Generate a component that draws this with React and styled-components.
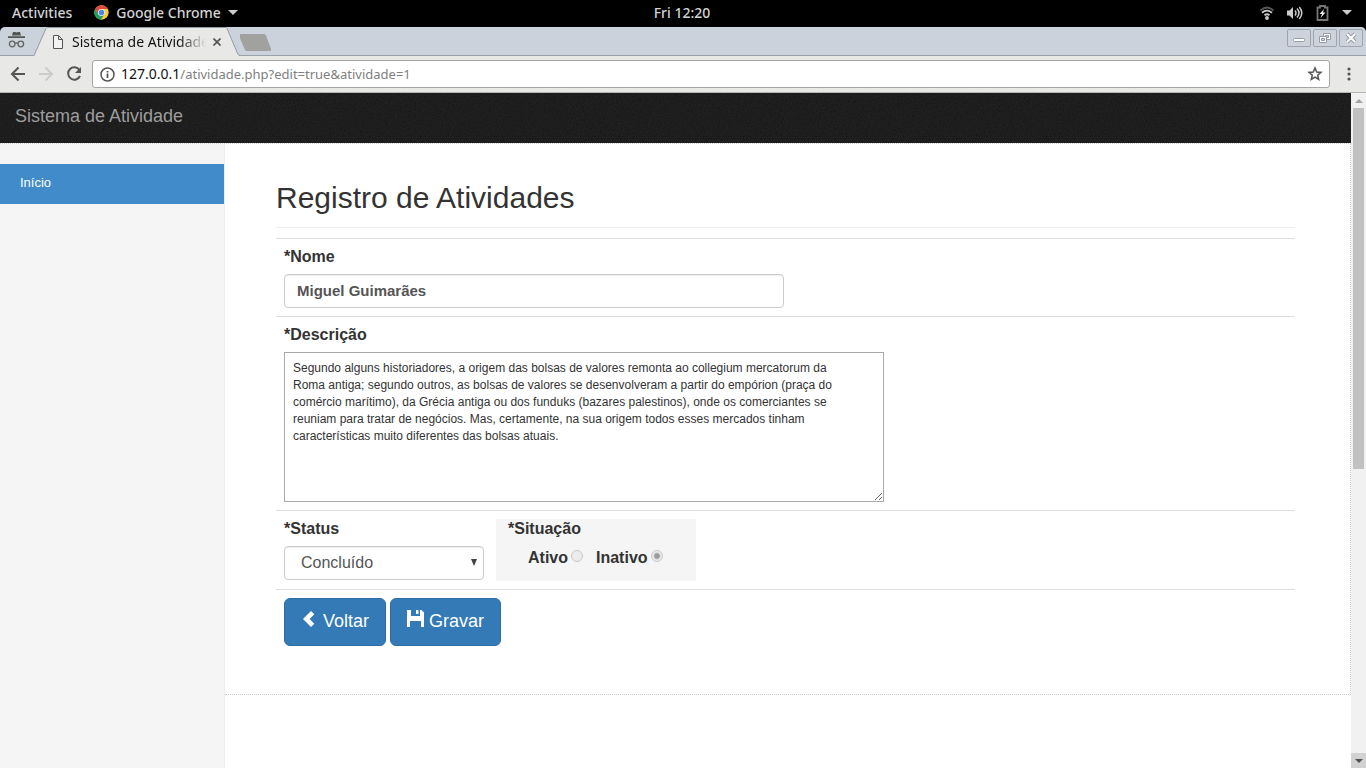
import React from 'react';
import styled, { createGlobalStyle } from 'styled-components';

const uiFont = '"Noto Sans", "Open Sans", sans-serif';
const pageFont = '"Liberation Sans", Arial, sans-serif';

const GlobalStyle = createGlobalStyle`
  *, *::before, *::after { box-sizing: border-box; }
  body { margin: 0; background: #000; font-family: ${pageFont}; color: #333; }
  button, input, select, textarea { font-family: inherit; margin: 0; }
  svg { display: block; flex: none; }
`;

const Desktop = styled.div`
  display: flex;
  flex-direction: column;
  height: 100vh;
  overflow: hidden;
`;

const TopBar = styled.header`
  display: grid;
  grid-template-columns: 1fr auto 1fr;
  align-items: center;
  flex: none;
  height: 27px;
  padding: 0 14px 2px 12px;
  background: #000;
  color: #d3d3d3;
  font: 500 14px/24px ${uiFont};
`;

const BarGroup = styled.div`
  display: flex;
  align-items: center;
  justify-content: ${(p) => (p.$end ? 'flex-end' : 'flex-start')};
  gap: ${(p) => p.$gap}px;
`;

const BarButton = styled.button`
  display: flex;
  align-items: center;
  gap: 7px;
  padding: 0;
  border: 0;
  background: none;
  color: inherit;
  font: inherit;
`;

const TabStrip = styled.div`
  display: flex;
  flex: none;
  height: 29px;
  background: #cbd2db;
  border-radius: 5px 5px 0 0;
  border-bottom: 1px solid #9ba1a8;
`;

const Incognito = styled.div`
  padding: 5px 0 0 8px;
  width: 34px;
`;

const Tab = styled.div`
  position: relative;
  display: flex;
  align-items: center;
  width: 206px;
  height: 29px;
  padding: 0 19px 0 19px;
`;

const TabShape = styled.svg`
  position: absolute;
  left: 0;
  top: 0;
`;

const TabTitle = styled.span`
  position: relative;
  flex: 1;
  min-width: 0;
  margin: 0 7px 0 9px;
  overflow: hidden;
  white-space: nowrap;
  color: #111;
  font: 14px/28px ${uiFont};
  mask-image: linear-gradient(to right, #000 80%, transparent);
`;

const IconButton = styled.button`
  position: relative;
  display: flex;
  padding: 0;
  border: 0;
  background: none;
`;

const WindowButtons = styled.div`
  display: flex;
  gap: 2px;
  margin-left: auto;
  padding: 2px 3px 0 0;
`;

const WindowButton = styled.button`
  display: flex;
  align-items: center;
  justify-content: center;
  width: 24px;
  height: 18px;
  padding: 0;
  background: #ccd3dc;
  border: 1px solid #9fa5ad;
  border-radius: 2px;
`;

const Toolbar = styled.div`
  display: flex;
  align-items: center;
  flex: none;
  height: 37px;
  padding: 0 14px 0 10px;
  background: #e8e8e7;
  border-bottom: 1px solid #b5b5b5;
`;

const NavButtons = styled.div`
  display: flex;
  gap: 12px;
  margin-right: 10px;
`;

const AddressBar = styled.div`
  display: flex;
  align-items: center;
  flex: 1;
  height: 28px;
  margin-right: 16px;
  padding: 0 6px 0 7px;
  background: #fff;
  border: 1px solid #a5a5a5;
  border-radius: 3px;
`;

const Url = styled.div`
  flex: 1;
  margin-left: 6px;
  color: #808080;
  font: 13px/26px ${uiFont};

  b { color: #111; font-size: 14px; font-weight: 400; }
`;

const Viewport = styled.div`
  display: flex;
  flex: 1;
  min-height: 0;
  background: #fff;
`;

const Page = styled.div`
  display: flex;
  flex-direction: column;
  flex: 1;
  min-width: 0;
`;

const Navbar = styled.nav`
  position: relative;
  flex: none;
  height: 50px;
  padding: 13px 15px;
  background: #131313;
`;

const Grain = styled.svg`
  position: absolute;
  inset: 0;
  width: 100%;
  height: 100%;
`;

const Brand = styled.a`
  position: relative;
  color: #9d9d9d;
  font-size: 18px;
  line-height: 20px;
  text-decoration: none;
`;

const Columns = styled.div`
  display: flex;
  flex: 1;
  border-top: 1px dotted #ccc;
`;

const Sidebar = styled.aside`
  flex: none;
  width: 225px;
  padding-top: 20px;
  background: #f5f5f5;
  border-right: 1px solid #eee;
`;

const SideLink = styled.a`
  display: block;
  padding: 9px 20px 11px;
  background: #428bca;
  color: #fff;
  font-size: 13px;
  line-height: 20px;
  text-decoration: none;
`;

const Main = styled.main`
  flex: 1;
  align-self: flex-start;
  padding: 37px 55px 40px 51px;
  border: dotted #ccc;
  border-width: 0 1px 1px 0;
`;

const Title = styled.h1`
  margin: 0 0 10px;
  padding-bottom: 13px;
  border-bottom: 1px solid #eee;
  font-size: 30px;
  font-weight: 400;
  line-height: 33px;
`;

const Row = styled.div`
  display: flex;
  flex-direction: ${(p) => (p.$inline ? 'row' : 'column')};
  align-items: flex-start;
  gap: ${(p) => p.$gap || 0}px;
  padding: 8px;
  border-top: 1px solid #ddd;
`;

const Label = styled.label`
  display: block;
  margin-bottom: 7px;
  font-size: 16px;
  font-weight: 700;
  line-height: 20px;
`;

const TextInput = styled.input`
  width: 500px;
  max-width: 100%;
  height: 34px;
  padding: 4px 12px 6px;
  border: 1px solid #ccc;
  border-radius: 4px;
  box-shadow: inset 0 1px 1px rgba(0, 0, 0, 0.075);
  color: #555;
  font-size: 15px;
  font-weight: 700;
`;

const TextArea = styled.textarea`
  display: block;
  width: 600px;
  max-width: 100%;
  height: 150px;
  padding: 7px 40px 7px 8px;
  border: 1px solid #a9a9a9;
  color: #333;
  font-size: 12px;
  line-height: 17px;
`;

const SelectWrap = styled.div`
  position: relative;
`;

const Select = styled.select`
  display: block;
  appearance: none;
  width: 200px;
  height: 34px;
  padding: 0 16px 2px;
  background: #fff;
  border: 1px solid #ccc;
  border-radius: 4px;
  box-shadow: inset 0 1px 1px rgba(0, 0, 0, 0.075);
  color: #555;
  font-size: 16px;
`;

const SelectArrow = styled.svg`
  position: absolute;
  right: 7px;
  top: 13px;
  pointer-events: none;
`;

const Situation = styled.fieldset`
  width: 200px;
  height: 62px;
  margin: 0;
  padding: 0 12px;
  border: 0;
  background: #f5f5f5;
`;

const Legend = styled.legend`
  float: left;
  width: 100%;
  padding: 0;
  margin-bottom: 7px;
  font-size: 16px;
  font-weight: 700;
  line-height: 20px;
`;

const Radios = styled.div`
  clear: both;
  display: flex;
  gap: 13px;
  padding-left: 20px;
`;

const RadioLabel = styled.label`
  display: flex;
  gap: 3px;
  font-size: 16px;
  font-weight: 700;
  line-height: 24px;
`;

const Radio = styled.input`
  appearance: none;
  width: 12px;
  height: 12px;
  margin-top: 4px;
  border: 1px solid #c8c8c8;
  border-radius: 50%;
  background: #ececec;

  &:checked { background: radial-gradient(circle, #9a9a9a 0 2px, #ececec 4px); }
`;

const Primary = styled.button`
  display: flex;
  gap: 5px;
  padding: 9px 16px 11px;
  background: #337ab7;
  border: 1px solid #2e6da4;
  border-radius: 6px;
  color: #fff;
  font-size: 18px;
  line-height: 26px;

  svg { margin-top: 2px; }
`;

const Scrollbar = styled.div`
  display: flex;
  flex-direction: column;
  flex: none;
  width: 15px;
  background: #f1f1f1;
`;

const ScrollButton = styled.button`
  display: flex;
  align-items: center;
  justify-content: center;
  flex: none;
  height: 15px;
  padding: 0;
  border: 0;
  background: ${(p) => (p.$active ? '#d2d2d2' : '#f1f1f1')};
`;

const Track = styled.div`
  flex: 1;
  padding: 0 2px;
`;

const Thumb = styled.div`
  height: 56%;
  background: #c1c1c1;
`;

const Caret = ({ size = 10, color = '#ccc' }) => (
  <svg width={size} height={size / 2} viewBox="0 0 10 5" fill={color}><path d="M0 0h10L5 5z" /></svg>
);

const ChromeLogo = () => (
  <svg width="15" height="15" viewBox="0 0 48 48">
    <circle cx="24" cy="24" r="23" fill="#fc3" />
    <path d="M4 12.5A23 23 0 0 1 44 12.5H24L13.5 30z" fill="#df4b3c" />
    <path d="M4 12.5A23 23 0 0 0 22 47l11-17-19 1z" fill="#1ba160" />
    <circle cx="24" cy="24" r="11" fill="#f1f1f1" />
    <circle cx="24" cy="24" r="8.5" fill="#4a87e8" />
  </svg>
);

const description =
  'Segundo alguns historiadores, a origem das bolsas de valores remonta ao collegium mercatorum da Roma antiga; segundo outros, as bolsas de valores se desenvolveram a partir do empórion (praça do comércio marítimo), da Grécia antiga ou dos funduks (bazares palestinos), onde os comerciantes se reuniam para tratar de negócios. Mas, certamente, na sua origem todos esses mercados tinham características muito diferentes das bolsas atuais.';

const DesktopBar = () => (
  <TopBar>
    <BarGroup $gap={22}>
      <BarButton>Activities</BarButton>
      <BarButton><ChromeLogo />Google Chrome<Caret /></BarButton>
    </BarGroup>
    <span>Fri 12:20</span>
    <BarGroup $gap={13} $end>
      <svg width="14" height="14" viewBox="0 0 14 14" fill="none" stroke="#ccc" strokeWidth="1.8">
        <path d="M.5 4.500Q7-1.500 13.500 4.500" stroke="#555" />
        <path d="M2 6.800Q7 2.500 12 6.800M4.500 9.300Q7 7.300 9.500 9.300" />
        <circle cx="7" cy="12" r="1.900" fill="#ccc" stroke="none" />
      </svg>
      <svg width="16" height="14" viewBox="0 0 16 14" fill="none" stroke="#ccc" strokeWidth="1.500">
        <path d="M0 4.500h2.500L6 1v12L2.500 9.500H0z" fill="#ccc" stroke="none" />
        <path d="M8 4.500q2 2.500 0 5M10 2.500q4 4.500 0 9M12.300 1q5 6 0 12" />
      </svg>
      <svg width="13" height="16" viewBox="0 0 12 16" fill="none">
        <path d="M3.500 2.500V1h5v1.500H11V15H1V2.500z" stroke="#777" strokeWidth="1.800" />
        <path d="M7.500 4 3 9h2.500L4 13l5-5.500H6.500z" fill="#eee" />
      </svg>
      <Caret />
    </BarGroup>
  </TopBar>
);

const BrowserChrome = () => (
  <>
    <TabStrip>
      <Incognito>
        <svg width="17" height="17" viewBox="0 0 17 17" fill="#555">
          <path d="M5 0h2l1.500.6L10 0h2l1 3.500H4zM0 4.300h17V6H0z" />
          <g fill="none" stroke="#666" strokeWidth="1.300"><circle cx="4.200" cy="12" r="2.800" /><circle cx="12.800" cy="12" r="2.800" /><path d="M7 11.500q1.500-1 3 0" /></g>
        </svg>
      </Incognito>
      <Tab>
        <TabShape width="206" height="29" viewBox="0 0 206 29">
          <path d="M0 29 12 1.500Q12.500.5 14 .5H191Q192.500.5 193 1.500L204 27.500 206 29z" fill="#e8e8e7" />
          <path d="M0 28.500 12 1.500Q12.500.5 14 .5H191Q192.500.5 193 1.500L204 27.500 206 28.500" fill="none" stroke="#949ba3" />
        </TabShape>
        <IconButton as="span">
          <svg width="10" height="14" viewBox="0 0 10 14" fill="#f2f2f2" stroke="#555"><path d="M.5.5h5l4 4v9h-9zM5.500.5v4h4" /></svg>
        </IconButton>
        <TabTitle>Sistema de Atividade</TabTitle>
        <IconButton aria-label="Fechar guia">
          <svg width="8" height="8" viewBox="0 0 8 8" stroke="#555" strokeWidth="1.700"><path d="m.5.5 7 7m0-7-7 7" /></svg>
        </IconButton>
      </Tab>
      <IconButton aria-label="Nova guia">
        <svg width="36" height="26" viewBox="0 0 36 26"><path d="M-1 9Q-2 7 0 7H24Q25.500 7 26 8.500L31 22Q31.500 24 30 24H7Q5.500 24 5 23z" fill="#a1a19f" /></svg>
      </IconButton>
      <WindowButtons>
        <WindowButton aria-label="Minimizar">
          <svg width="12" height="12" viewBox="0 0 12 12"><rect x=".5" y="6.500" width="11" height="3" rx="1" fill="#fff" stroke="#969ca5" /></svg>
        </WindowButton>
        <WindowButton aria-label="Restaurar">
          <svg width="12" height="12" viewBox="0 0 12 12" stroke="#969ca5"><path d="M4.500 1.500h7v6h-7z" fill="#fff" /><path d="M6.500 3.500h3v2h-3z" fill="#ccd3dc" /><path d="M.5 4.500h7v6h-7z" fill="#fff" /><path d="M2.500 6.500h3v2h-3z" fill="#ccd3dc" /></svg>
        </WindowButton>
        <WindowButton aria-label="Fechar">
          <svg width="12" height="12" viewBox="0 0 12 12" fill="none"><path d="m2 2 8 8m0-8-8 8" stroke="#969ca5" strokeWidth="4" /><path d="m2 2 8 8m0-8-8 8" stroke="#fff" strokeWidth="2" /></svg>
        </WindowButton>
      </WindowButtons>
    </TabStrip>
    <Toolbar>
      <NavButtons>
        <IconButton aria-label="Voltar página">
          <svg width="16" height="16" viewBox="0 0 16 16" fill="none" stroke="#555" strokeWidth="2"><path d="M15 8H2m6.500-6.500L2 8l6.500 6.500" /></svg>
        </IconButton>
        <IconButton aria-label="Avançar página">
          <svg width="16" height="16" viewBox="0 0 16 16" fill="none" stroke="#ccc" strokeWidth="2"><path d="M1 8h13M7.500 1.500 14 8l-6.500 6.500" /></svg>
        </IconButton>
        <IconButton aria-label="Recarregar">
          <svg width="16" height="16" viewBox="0 0 16 16" fill="none" stroke="#555" strokeWidth="2"><path d="M13.500 4A6.200 6.200 0 1 0 14 10" /><path d="M15 1v6H9z" fill="#555" stroke="none" /></svg>
        </IconButton>
      </NavButtons>
      <AddressBar>
        <svg width="15" height="15" viewBox="0 0 15 15" fill="none" stroke="#555" strokeWidth="1.500"><circle cx="7.500" cy="7.500" r="6.500" /><path d="M7.500 6.500V11M7.500 4v1.500" strokeWidth="1.800" /></svg>
        <Url><b>127.0.0.1</b>/atividade.php?edit=true&amp;atividade=1</Url>
        <IconButton aria-label="Favorito">
          <svg width="16" height="16" viewBox="0 0 16 16" fill="none" stroke="#555" strokeWidth="1.500"><path d="m8 2 1.700 4 4.300.4-3.300 2.800 1 4.300L8 11.200l-3.700 2.300 1-4.300L2 6.400 6.300 6z" /></svg>
        </IconButton>
      </AddressBar>
      <IconButton aria-label="Menu">
        <svg width="6" height="14" viewBox="0 0 6 14" fill="#555"><circle cx="3" cy="2" r="1.600" /><circle cx="3" cy="7" r="1.600" /><circle cx="3" cy="12" r="1.600" /></svg>
      </IconButton>
    </Toolbar>
  </>
);

const ActivityForm = () => (
  <form onSubmit={(e) => e.preventDefault()}>
    <Row>
      <Label htmlFor="nome">*Nome</Label>
      <TextInput id="nome" defaultValue="Miguel Guimarães" />
    </Row>
    <Row>
      <Label htmlFor="descricao">*Descrição</Label>
      <TextArea id="descricao" spellCheck={false} defaultValue={description} />
    </Row>
    <Row $inline $gap={12}>
      <div>
        <Label htmlFor="status">*Status</Label>
        <SelectWrap>
          <Select id="status" defaultValue="Concluído">
            <option>Concluído</option>
          </Select>
          <SelectArrow width="6" height="7" viewBox="0 0 6 7" fill="#444"><path d="M0 0h6L3 7z" /></SelectArrow>
        </SelectWrap>
      </div>
      <Situation>
        <Legend>*Situação</Legend>
        <Radios>
          <RadioLabel>Ativo<Radio type="radio" name="situacao" disabled /></RadioLabel>
          <RadioLabel>Inativo<Radio type="radio" name="situacao" defaultChecked disabled /></RadioLabel>
        </Radios>
      </Situation>
    </Row>
    <Row $inline $gap={4}>
      <Primary type="button">
        <svg width="17" height="18" viewBox="0 0 17 18" fill="#fff"><path d="M10 1 13.300 4.300 8.600 9l4.700 4.700L10 17 2 9z" /></svg>
        Voltar
      </Primary>
      <Primary type="submit">
        <svg width="17" height="18" viewBox="0 0 17 18" fill="#fff"><path d="M0 0h4v6h9V0h1.500L17 2.500V17h-3v-6H3v6H0zM9 0h2.500v4H9z" /></svg>
        Gravar
      </Primary>
    </Row>
  </form>
);

export default function App() {
  return (
    <Desktop>
      <GlobalStyle />
      <DesktopBar />
      <BrowserChrome />
      <Viewport>
        <Page>
          <Navbar>
            <Grain aria-hidden="true">
              <filter id="grain">
                <feTurbulence type="fractalNoise" baseFrequency="0.6" numOctaves="2" stitchTiles="stitch" />
                <feColorMatrix type="matrix" values="1.500 0 0 0 -0.200  1.500 0 0 0 -0.200  1.500 0 0 0 -0.200  0 0 0 0 1" />
              </filter>
              <rect width="100%" height="100%" filter="url(#grain)" opacity="0.06" />
            </Grain>
            <Brand href="#">Sistema de Atividade</Brand>
          </Navbar>
          <Columns>
            <Sidebar><SideLink href="#">Início</SideLink></Sidebar>
            <Main>
              <Title>Registro de Atividades</Title>
              <ActivityForm />
            </Main>
          </Columns>
        </Page>
        <Scrollbar>
          <ScrollButton aria-label="Rolar para cima">
            <svg width="8" height="4" viewBox="0 0 8 4" fill="#a3a3a3"><path d="M0 4h8L4 0z" /></svg>
          </ScrollButton>
          <Track><Thumb /></Track>
          <ScrollButton $active aria-label="Rolar para baixo"><Caret size={8} color="#505050" /></ScrollButton>
        </Scrollbar>
      </Viewport>
    </Desktop>
  );
}
